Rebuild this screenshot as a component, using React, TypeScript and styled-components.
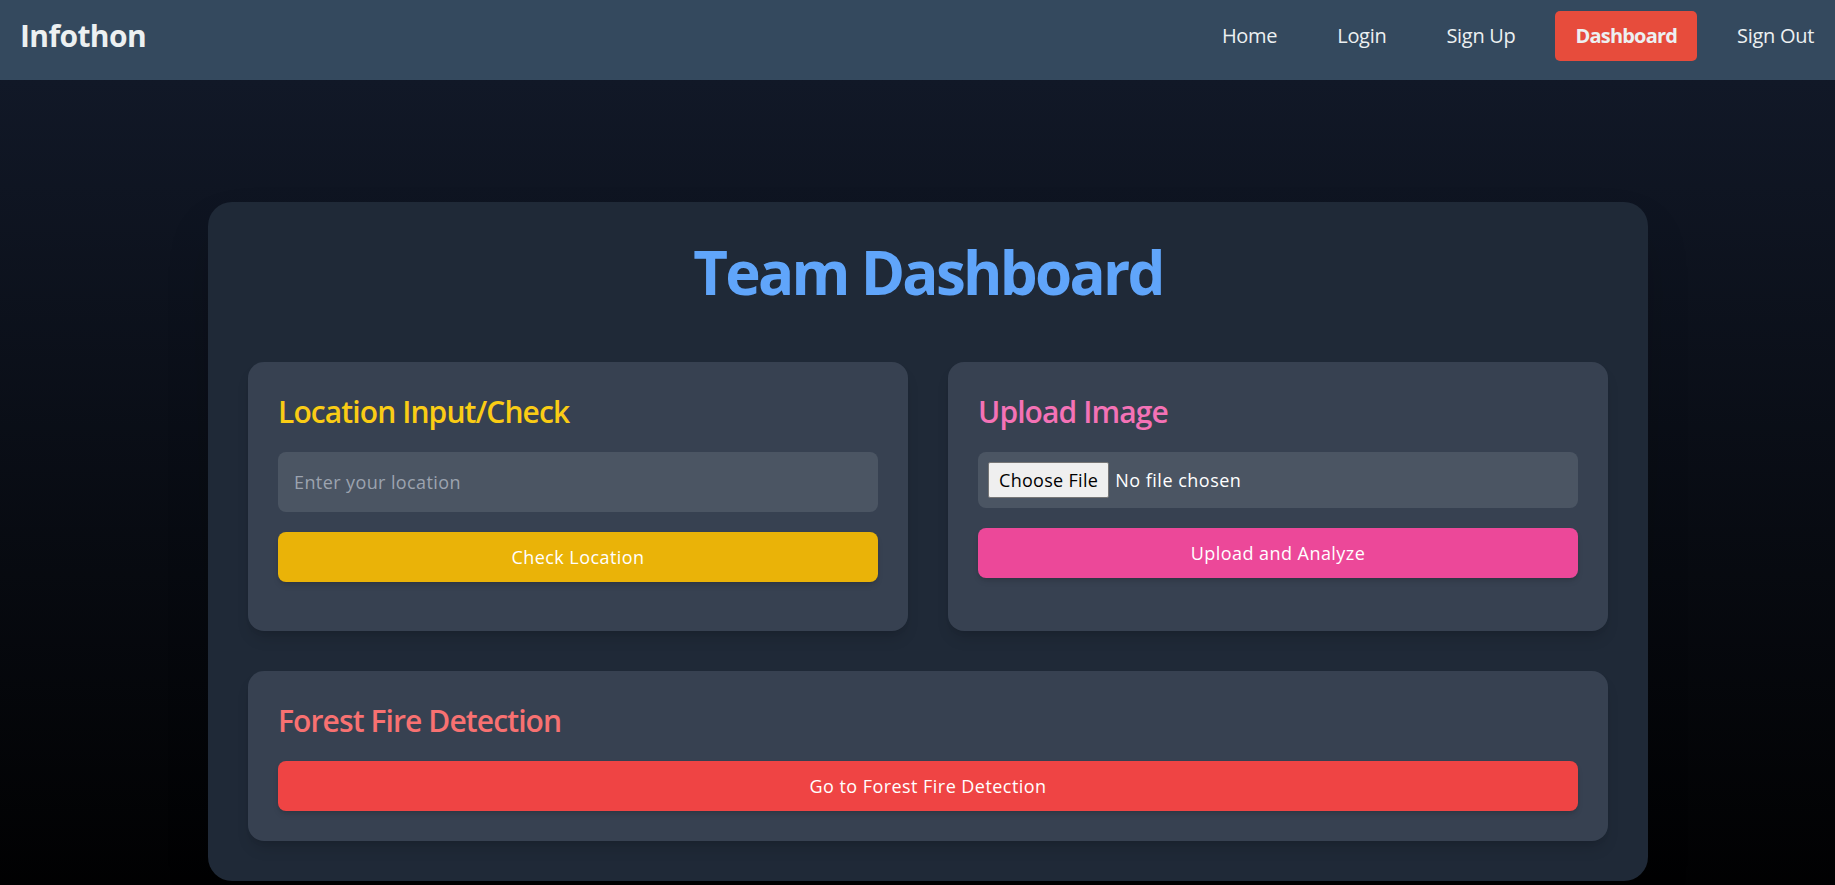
import React from "react";
import styled, { createGlobalStyle } from "styled-components";

const GlobalStyle = createGlobalStyle`
  html, body {
    margin: 0;
    padding: 0;
  }
  body {
    font-family: "Open Sans", "Noto Sans", sans-serif;
    background: #000000;
  }
  *, *::before, *::after {
    box-sizing: border-box;
  }
`;

const Page = styled.div`
  min-height: 100vh;
  display: flex;
  flex-direction: column;
`;

const NavBar = styled.nav`
  height: 80px;
  background: #34495e;
  display: flex;
  align-items: center;
  justify-content: space-between;
  padding: 0 1px 9px 20px;
`;

const Brand = styled.div`
  font-size: 30px;
  font-weight: 700;
  color: #ecf0f1;
  letter-spacing: -0.02em;
`;

const NavList = styled.ul`
  display: flex;
  align-items: center;
  gap: 20px;
  list-style: none;
  margin: 0;
  padding: 0;
`;

const NavLink = styled.a<{ $active?: boolean }>`
  display: block;
  padding: 0 20px;
  height: 50px;
  line-height: 50px;
  font-size: 20px;
  font-weight: ${(p) => (p.$active ? 700 : 400)};
  color: #ecf0f1;
  text-decoration: none;
  border-radius: 5px;
  letter-spacing: ${(p) => (p.$active ? "-0.04em" : "-0.015em")};
  background: ${(p) => (p.$active ? "#e74c3c" : "transparent")};
`;

const Main = styled.main`
  flex: 1;
  background: linear-gradient(to bottom, #111827, #000000);
  display: flex;
  justify-content: center;
  align-items: flex-start;
  padding: 122px 0 40px 21px;
`;

const Panel = styled.section`
  width: 1440px;
  background: #1f2937;
  border-radius: 24px;
  padding: 40px;
  box-shadow: 0 25px 50px -12px rgba(0, 0, 0, 0.25);
`;

const Title = styled.h1`
  margin: 0 0 60px;
  text-align: center;
  font-size: 60px;
  line-height: 60px;
  font-weight: 700;
  color: #60a5fa;
  letter-spacing: -0.045em;
`;

const CardGrid = styled.div`
  display: grid;
  grid-template-columns: 1fr 1fr;
  gap: 40px;
`;

const Card = styled.div<{ $wide?: boolean }>`
  background: #374151;
  border-radius: 16px;
  padding: 32px 30px ${(p) => (p.$wide ? "30px" : "49px")};
  grid-column: ${(p) => (p.$wide ? "1 / -1" : "auto")};
  box-shadow: 0 10px 15px -3px rgba(0, 0, 0, 0.12),
    0 4px 6px -4px rgba(0, 0, 0, 0.12);
`;

const CardTitle = styled.h2<{ $color: string }>`
  margin: 0 0 22px;
  font-size: 30px;
  line-height: 36px;
  font-weight: 600;
  color: ${(p) => p.$color};
  letter-spacing: -0.03em;
`;

const TextInput = styled.input`
  display: block;
  width: 100%;
  height: 60px;
  padding: 0 16px;
  margin: 0 0 20px;
  font-family: inherit;
  font-size: 18px;
  letter-spacing: 0.4px;
  color: #ffffff;
  background: #4b5563;
  border: none;
  border-radius: 8px;
  outline: none;
  &::placeholder {
    color: #9ca3af;
  }
`;

const FileInput = styled.input`
  display: block;
  width: 100%;
  height: 56px;
  padding: 10px;
  margin: 0 0 20px;
  font-family: inherit;
  font-size: 18px;
  line-height: 36px;
  letter-spacing: 0.5px;
  color: #ffffff;
  background: #4b5563;
  border: none;
  border-radius: 8px;
  outline: none;
  &::file-selector-button {
    height: 36px;
    margin: 0 6px 0 0;
    padding: 0 10px;
    font-family: inherit;
    font-size: 18px;
    letter-spacing: 0.3px;
    color: #000000;
    background: #efefef;
    border: 1px solid #767676;
    border-radius: 2px;
  }
`;

const ActionButton = styled.button<{ $bg: string }>`
  display: block;
  width: 100%;
  height: 50px;
  border: none;
  border-radius: 8px;
  background: ${(p) => p.$bg};
  color: #ffffff;
  font-family: inherit;
  font-size: 18px;
  letter-spacing: 0.45px;
  cursor: pointer;
  box-shadow: 0 4px 6px -1px rgba(0, 0, 0, 0.12),
    0 2px 4px -2px rgba(0, 0, 0, 0.12);
`;

export default function App() {
  return (
    <>
      <GlobalStyle />
      <Page>
        <NavBar>
          <Brand>Infothon</Brand>
          <NavList>
            <li><NavLink href="#">Home</NavLink></li>
            <li><NavLink href="#">Login</NavLink></li>
            <li><NavLink href="#">Sign Up</NavLink></li>
            <li><NavLink href="#" $active>Dashboard</NavLink></li>
            <li><NavLink href="#">Sign Out</NavLink></li>
          </NavList>
        </NavBar>
        <Main>
          <Panel>
            <Title>Team Dashboard</Title>
            <CardGrid>
              <Card>
                <CardTitle $color="#facc15">Location Input/Check</CardTitle>
                <TextInput type="text" placeholder="Enter your location" />
                <ActionButton $bg="#eab308">Check Location</ActionButton>
              </Card>
              <Card>
                <CardTitle $color="#f472b6">Upload Image</CardTitle>
                <FileInput type="file" />
                <ActionButton $bg="#ec4899">Upload and Analyze</ActionButton>
              </Card>
              <Card $wide>
                <CardTitle $color="#f87171">Forest Fire Detection</CardTitle>
                <ActionButton $bg="#ef4444">Go to Forest Fire Detection</ActionButton>
              </Card>
            </CardGrid>
          </Panel>
        </Main>
      </Page>
    </>
  );
}
